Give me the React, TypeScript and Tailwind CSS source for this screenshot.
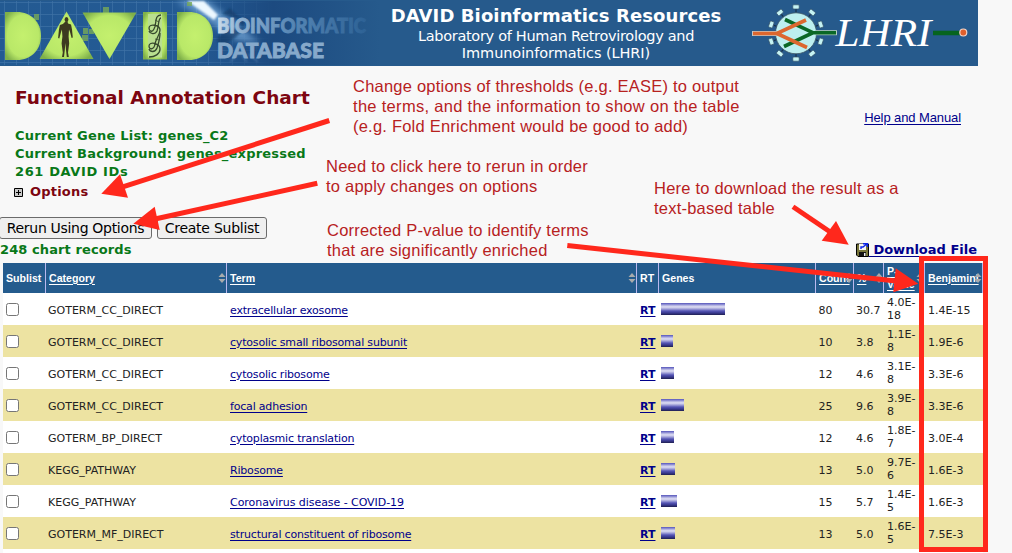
import type { ReactNode } from 'react';

type Row = {
  category: string;
  term: string;
  bar: string;
  count: string;
  pct: string;
  p: string;
  benjamini: string;
  tracking?: string;
};

const rows: Row[] = [
  { category: 'GOTERM_CC_DIRECT', term: 'extracellular exosome', bar: 'w-[64px]', count: '80', pct: '30.7', p: '4.0E-18', benjamini: '1.4E-15' },
  { category: 'GOTERM_CC_DIRECT', term: 'cytosolic small ribosomal subunit', bar: 'w-[12px]', count: '10', pct: '3.8', p: '1.1E-8', benjamini: '1.9E-6' },
  { category: 'GOTERM_CC_DIRECT', term: 'cytosolic ribosome', bar: 'w-[13px]', count: '12', pct: '4.6', p: '3.1E-8', benjamini: '3.3E-6' },
  { category: 'GOTERM_CC_DIRECT', term: 'focal adhesion', bar: 'w-[23px]', count: '25', pct: '9.6', p: '3.9E-8', benjamini: '3.3E-6' },
  { category: 'GOTERM_BP_DIRECT', term: 'cytoplasmic translation', bar: 'w-[13px]', count: '12', pct: '4.6', p: '1.8E-7', benjamini: '3.0E-4' },
  { category: 'KEGG_PATHWAY', term: 'Ribosome', bar: 'w-[14px]', count: '13', pct: '5.0', p: '9.7E-6', benjamini: '1.6E-3' },
  { category: 'KEGG_PATHWAY', term: 'Coronavirus disease - COVID-19', bar: 'w-[16px]', count: '15', pct: '5.7', p: '1.4E-5', benjamini: '1.6E-3', tracking: 'tracking-[-0.05px]' },
  { category: 'GOTERM_MF_DIRECT', term: 'structural constituent of ribosome', bar: 'w-[14px]', count: '13', pct: '5.0', p: '1.6E-5', benjamini: '7.5E-3' },
];

const columns = 'grid grid-cols-[43px_181px_410px_22px_157px_38px_30px_41px_58px]';

function DavidLogo() {
  return (
    <svg className="block h-[66px] w-[380px] shrink-0" viewBox="0 0 380 66">
      <defs>
        <radialGradient id="lime" cx="50%" cy="50%" r="62%">
          <stop offset="0" stopColor="#c4f06e" />
          <stop offset="0.7" stopColor="#b9e868" />
          <stop offset="1" stopColor="#7fb04a" />
        </radialGradient>
        <linearGradient id="sky" x1="0" x2="1" y1="0" y2="0">
          <stop offset="0" stopColor="#235a92" />
          <stop offset="0.5" stopColor="#245a94" />
          <stop offset="0.72" stopColor="#1c4a80" />
          <stop offset="1" stopColor="#265a8c" />
        </linearGradient>
        <linearGradient id="word" x1="216" x2="372" y1="0" y2="0" gradientUnits="userSpaceOnUse">
          <stop offset="0" stopColor="#cfdeec" />
          <stop offset="0.15" stopColor="#8fb1d1" />
          <stop offset="0.5" stopColor="#5585b3" />
          <stop offset="1" stopColor="#2a5f93" />
        </linearGradient>
        <pattern id="mesh" width="12" height="12" patternUnits="userSpaceOnUse" x="4" y="2">
          <path d="M0 .5H12M.5 0V12" stroke="#5b8bb9" strokeWidth="0.7" opacity="0.5" />
        </pattern>
        <linearGradient id="fade" x1="0" x2="1" y1="0" y2="0">
          <stop offset="0.5" stopColor="#fff" />
          <stop offset="0.72" stopColor="#000" />
        </linearGradient>
        <mask id="left"><rect width="380" height="66" fill="url(#fade)" /></mask>
        <filter id="soft" x="-30%" y="-30%" width="160%" height="160%"><feGaussianBlur stdDeviation="3" /></filter>
        <filter id="rough" x="-10%" y="-10%" width="120%" height="120%"><feGaussianBlur stdDeviation="0.8" /></filter>
      </defs>
      <rect width="380" height="66" fill="#265a8c" />
      <rect y="1" width="380" height="64" fill="url(#sky)" />
      <rect y="1" width="380" height="64" fill="url(#mesh)" mask="url(#left)" />
      <path d="M176 1L208 1L232 21L260 43L236 40L212 24Z" fill="#83b6e5" opacity="0.65" filter="url(#soft)" />
      <path d="M187 1L204 1L218 15L214 20Z" fill="#ecf8ff" filter="url(#rough)" />
      <path d="M222 14L230 8L240 18L246 20L240 31L230 27L217 38L219 47L232 40L244 30L238 18Z" fill="#123d6b" opacity="0.7" filter="url(#rough)" />
      <path d="M230 62L240 53L247 62M248 54L258 62" stroke="#7298c4" fill="none" opacity="0.7" filter="url(#rough)" />
      <g fill="#77a958" opacity="0.8">
        <path d="M34 14h5v6h-5zM103 7h6v6h-6zM83 28h5v6h-5zM82 35h6v6h-6zM89 29h5v5h-5zM187 2h5v4h-5z" />
      </g>
      <path d="M5 12H17C31 12 41 22 41 36C41 50 31 60 17 60H5Z" fill="url(#lime)" />
      <path d="M66.500 11.500L93.500 59H39.500Z" fill="url(#lime)" />
      <path d="M82.500 12.500H136.500L109.500 59Z" fill="url(#lime)" />
      <path d="M143 12H167V59.500H143Z" fill="url(#lime)" />
      <path d="M177 12H189C203 12 213 22 213 36C213 50 203 60 189 60H177Z" fill="url(#lime)" />
      <g fill="#3d3a20">
        <ellipse cx="66.500" cy="19.500" rx="1.900" ry="2.600" />
        <path d="M65.500 21.500h2l.5 2l3 1l1 5l.8 8l-1.200 .5l-1.600-6l-1-2.500l-.4 7l.6 7l-1.200 9l.8 4.500h-2l-.8-7l-.6-7l-.6 7l-.8 7h-2l.8-4.500l-1.200-9l.8-7l-.5-7l-1 3l-1.600 6l-1.200-.5l.8-8l1-5l3-1z" />
      </g>
      <rect x="148" y="14" width="14" height="43.500" fill="#b9df90" />
      <g fill="none" stroke="#36492c" strokeWidth="1.300">
        <path d="M161 15C154 15 157 24 154 29C152 33 149 31 149 28C149 23 160 25 160 30C160 35 156 38 155 44C154 50 149 50 149 46C149 41 160 43 160 49C160 54 155 57 149 57" />
        <path d="M161 18C158 18 159 26 157 31C155 35 150 34 149 31M160 33C160 39 159 42 157 48C155 53 150 52 149 49" />
        <path d="M155 20L159 22M155 25L158 26M155 39L159 40M154 44L158 45" strokeWidth="0.800" />
      </g>
      <g fontFamily="Lato, sans-serif" fontWeight="900" fontSize="20.500" stroke="url(#word)" strokeWidth="0.900" fill="url(#word)">
        <text x="217" y="33" textLength="149" lengthAdjust="spacingAndGlyphs">BIOINFORMATIC</text>
        <text x="217" y="58" textLength="107" lengthAdjust="spacingAndGlyphs" fill="#86a9cb" stroke="#86a9cb">DATABASE</text>
      </g>
    </svg>
  );
}

function LhriLogo() {
  const spikes = [0, 38, 71, 109, 142, 180, 218, 251, 289, 322];
  return (
    <svg className="block h-[66px] w-[228px] shrink-0" viewBox="750 0 228 66">
      {spikes.map((a) => (
        <g key={a} transform={`rotate(${a} 796 33)`}>
          <path d="M796 13V9" stroke="#16304c" strokeWidth="1.200" />
          <rect x="792.800" y="4.800" width="6.400" height="4.200" rx="1" fill="#c5f3f3" stroke="#38556c" strokeWidth="0.700" />
        </g>
      ))}
      <circle cx="796" cy="33.300" r="20.500" fill="#bdeff0" stroke="#3b5666" strokeWidth="0.800" />
      <path d="M752 33.500H778" stroke="#c9c5c0" strokeWidth="5" />
      <path d="M816 32.700H837" stroke="#b5d0c0" strokeWidth="5" />
      <g fill="none" strokeWidth="3.600">
        <path d="M785 19.500L813 32.700L784 46.500M811 32.700H836" stroke="#0a6826" />
        <path d="M753 33.500H777L806 20M777 33.500L807 47.500" stroke="#dc672f" />
      </g>
      <text x="835.500" y="46" textLength="96" lengthAdjust="spacingAndGlyphs" fontFamily="'Liberation Serif', serif" fontStyle="italic" fontSize="40" fill="#fff">LHRI</text>
      <path d="M933 33H961" stroke="#06641f" strokeWidth="4.500" />
      <circle cx="963.300" cy="32.500" r="3.500" fill="#e0602c" stroke="#f5d5c6" strokeWidth="1.200" />
    </svg>
  );
}

function Sorter() {
  return (
    <svg className="absolute top-1/2 right-0 h-[10px] w-[8px] -translate-y-1/2" viewBox="0 0 8 10">
      <path d="M4 0L7.500 4H.5ZM4 10L7.500 6H.5Z" fill="#a9abac" />
    </svg>
  );
}

function Head({ children, sort, link }: { children: ReactNode; sort?: boolean; link?: boolean }) {
  return (
    <div className="relative flex items-center border-r border-[#b9b8ee] pl-[3px]">
      <span className={link ? 'underline decoration-1 underline-offset-2' : ''}>{children}</span>
      {sort && <Sorter />}
    </div>
  );
}

function FloppyIcon() {
  return (
    <svg className="block h-[14px] w-[13px]" viewBox="0 0 13 14">
      <path d="M.5 1H12.500V13.500H2L.5 12Z" fill="#77753a" stroke="#000" />
      <path d="M3 1H10V7H3Z" fill="#f5f5f5" />
      <path d="M3 9H10V13H3Z" fill="#111" />
      <path d="M8 10H9.500V13H8Z" fill="#eee" />
      <path d="M5 6V4H7L11 .8M7 .8H11.500V4" fill="none" stroke="#0b25e8" strokeWidth="1.400" />
    </svg>
  );
}

function Arrow({ x, y, bx, by, head }: { x: number; y: number; bx: number; by: number; head: string }) {
  return (
    <g>
      <path d={`M${x} ${y}L${bx} ${by}`} stroke="#ff281c" strokeWidth="5" />
      <path d={head} fill="#ff281c" />
    </g>
  );
}

function Note({ className, children }: { className: string; children: ReactNode }) {
  return (
    <p className={`absolute font-['Liberation_Sans',Arial,sans-serif] text-[16.5px] leading-[20px] tracking-[0.22px] whitespace-nowrap text-[#b7211e] ${className}`}>
      {children}
    </p>
  );
}

const buttonStyle = 'h-[22px] rounded-[3px] border border-[#6b6b6b] bg-[#efefef] text-[14px] leading-[20px] text-black whitespace-nowrap';

export default function App() {
  return (
    <div className="relative h-[553px] w-[1012px] overflow-hidden bg-[#f8f8f8] font-['DejaVu_Sans',Verdana,sans-serif]">
      <header className="flex h-[66px] w-[978px] bg-[#265a8c] text-white">
        <DavidLogo />
        <div className="flex w-[370px] flex-col items-center pt-[5px] pr-[18px] whitespace-nowrap">
          <h1 className="text-[18px] leading-[22px] font-bold tracking-[0.1px]">DAVID Bioinformatics Resources</h1>
          <p className="mt-px text-center text-[14.5px] leading-[17px]">
            <span className="tracking-[-0.3px]">Laboratory of Human Retrovirology and</span>
            <br />
            <span className="tracking-[-0.08px]">Immunoinformatics (LHRI)</span>
          </p>
        </div>
        <LhriLogo />
      </header>

      <div className="flex h-[151px] justify-between">
        <div className="pt-[21px] pl-[15px] whitespace-nowrap">
          <h2 className="text-[18.5px] leading-[22px] font-bold text-[#7d0510]">Functional Annotation Chart</h2>
          <div className="mt-[18px] text-[13px] leading-[18px] font-bold tracking-[0.21px] text-[#087818]">
            <p>Current Gene List: genes_C2</p>
            <p>Current Background: genes_expressed</p>
            <p className="tracking-[0.62px]">261 DAVID IDs</p>
          </div>
          <div className="mt-[2px] flex items-center text-[13px] leading-[18px] font-bold tracking-[0.2px] text-[#7d0510]">
            <svg className="-ml-px h-[9px] w-[9px]" viewBox="0 0 9 9">
              <path d="M.5 .5H8.500V8.500H.5Z" fill="#c8c8c8" stroke="#000" />
              <path d="M2 4.500H7M4.500 2V7" stroke="#000" />
            </svg>
            <span className="ml-[7px]">Options</span>
          </div>
        </div>
        <a className="mt-[43px] mr-[51px] h-[18px] font-['Liberation_Sans',Arial,sans-serif] text-[13px] leading-[18px] tracking-[-0.1px] text-[#00008b] underline underline-offset-2">
          Help and Manual
        </a>
      </div>

      <div className="flex gap-[5px]">
        <button className={`${buttonStyle} -ml-px w-[153px] tracking-[-0.31px]`}>Rerun Using Options</button>
        <button className={`${buttonStyle} w-[110px] tracking-[-0.25px]`}>Create Sublist</button>
      </div>
      <div className="flex h-[24px] w-[977px] justify-between whitespace-nowrap">
        <p className="mt-[2px] text-[13px] leading-[18px] font-bold tracking-[0.1px] text-[#087818]">248 chart records</p>
        <a className="mt-[2px] flex h-[18px] items-start text-[13px] leading-[18px] font-bold text-[#00008b]">
          <span className="mt-[2px]"><FloppyIcon /></span>
          <span className="whitespace-pre underline underline-offset-2"> Download File</span>
        </a>
      </div>

      <main className="ml-[3px] w-[980px] bg-white text-[11px] text-[#222]">
        <div className={`${columns} h-[30px] bg-[#245b8d] font-['Liberation_Sans',Arial,sans-serif] text-[10.6px] leading-[13px] font-bold whitespace-nowrap text-white`}>
          <Head>Sublist</Head>
          <Head link sort>Category</Head>
          <Head link sort>Term</Head>
          <Head>RT</Head>
          <Head>Genes</Head>
          <Head link sort>Count</Head>
          <Head link sort>%</Head>
          <Head link sort>P-<br />Value</Head>
          <Head link sort>Benjamini</Head>
        </div>
        {rows.map((r) => (
          <div key={r.term} className={`${columns} h-[32px] items-center leading-[13px] whitespace-nowrap even:bg-white odd:bg-[#ede3a2]`}>
            <input type="checkbox" className="mt-px ml-[3px] h-[13px] w-[13px] appearance-none rounded-[2.5px] border border-[#767676] bg-white" />
            <span className="pt-[2px] pl-[2px]">{r.category}</span>
            <a className={`pt-[2px] pl-[3px] text-[#00008b] underline underline-offset-2 ${r.tracking ?? 'tracking-[-0.19px]'}`}>{r.term}</a>
            <a className="pt-[2px] pl-[3px] font-bold text-[#00008b] underline underline-offset-2">RT</a>
            <div className="pl-[2px]">
              <div className={`${r.bar} h-[12px] bg-[linear-gradient(to_bottom,#5656b8_0px,#7878cc_1px,#c9c9ea_3px,#dedef3_4px,#a0a0d8_6px,#5555b5_8px,#38388e_10px,#202050_12px)]`} />
            </div>
            <span className="pt-[2px] pl-[2.5px]">{r.count}</span>
            <span className="pt-[2px] pl-[2px]">{r.pct}</span>
            <span className="pl-[3px]">
              {r.p.slice(0, 4)}-
              <br />
              {r.p.slice(5)}
            </span>
            <span className="pt-[2px] pl-[3px]">{r.benjamini}</span>
          </div>
        ))}
        <div className="h-[4px]" />
      </main>

      <Note className="top-[76px] left-[353px]">
        Change options of thresholds (e.g. EASE) to output
        <br />
        <span className="tracking-[0.3px]">the terms, and the information to show on the table</span>
        <br />
        (e.g. Fold Enrichment would be good to add)
      </Note>
      <Note className="top-[156px] left-[326px]">
        Need to click here to rerun in order
        <br />
        to apply changes on options
      </Note>
      <Note className="top-[220px] left-[327px]">
        Corrected P-value to identify terms
        <br />
        that are significantly enriched
      </Note>
      <Note className="top-[178px] left-[654px]">
        Here to download the result as a
        <br />
        text-based table
      </Note>
      <svg className="pointer-events-none absolute inset-0 h-[553px] w-[1012px]" viewBox="0 0 1012 553">
        <Arrow x={329.300} y={120.500} bx={122} by={187.100} head="M101.300 193.700L120 174.300L128 197.700Z" />
        <Arrow x={317.300} y={183.300} bx={155} by={219} head="M133.300 223.700L154.700 206.700L159.700 230Z" />
        <Arrow x={567.300} y={245.600} bx={896} by={281} head="M918.300 283.700L895.700 268.300L893.300 292.300Z" />
        <Arrow x={793} y={206.700} bx={831} by={232.500} head="M848.700 244.700L836 221L821.700 240.700Z" />
        <rect x="921.500" y="258.500" width="64" height="291" fill="none" stroke="#ff281c" strokeWidth="5" />
      </svg>
    </div>
  );
}
